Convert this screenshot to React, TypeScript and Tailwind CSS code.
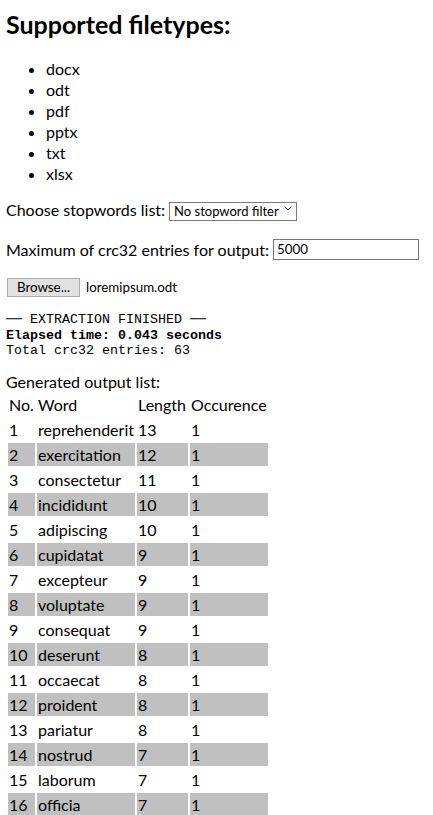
const fileTypes = ["docx", "odt", "pdf", "pptx", "txt", "xlsx"];

const words: [string, number][] = [
  ["reprehenderit", 13],
  ["exercitation", 12],
  ["consectetur", 11],
  ["incididunt", 10],
  ["adipiscing", 10],
  ["cupidatat", 9],
  ["excepteur", 9],
  ["voluptate", 9],
  ["consequat", 9],
  ["deserunt", 8],
  ["occaecat", 8],
  ["proident", 8],
  ["pariatur", 8],
  ["nostrud", 7],
  ["laborum", 7],
  ["officia", 7],
];

export default function App() {
  return (
    <div className="px-[6px] text-[16px] leading-[21px] text-black font-['Lato',sans-serif]">
      <h1 className="mt-[8px] text-[25px] font-bold leading-[32px]">Supported filetypes:</h1>

      <ul className="mt-[18px] list-disc pl-[40px]">
        {fileTypes.map((t) => (
          <li key={t}>{t}</li>
        ))}
      </ul>

      <div className="mt-[15px] flex h-[21px] items-center gap-[4px]">
        <span>Choose stopwords list:</span>
        <div className="relative">
          <select className="h-[19px] w-[128px] appearance-none border border-[#7a7a7a] bg-white pl-[4px] text-[13px] leading-[17px] outline-none">
            <option>No stopword filter</option>
          </select>
          <svg
            className="pointer-events-none absolute right-[5px] top-[7px]"
            width="8"
            height="5"
            viewBox="0 0 8 5"
            fill="none"
            stroke="#555"
            strokeWidth="1"
          >
            <path d="M0.5 0.5 L4 4 L7.5 0.5" />
          </svg>
        </div>
      </div>

      <div className="mt-[19px] flex h-[21px] items-center gap-[4px]">
        <span>Maximum of crc32 entries for output:</span>
        <input
          defaultValue="5000"
          className="h-[21px] w-[146px] border border-[#767676] px-[3px] text-[13.33px] outline-none"
        />
      </div>

      <div className="mt-[18px] flex h-[19px] items-center gap-[6px] text-[13.33px]">
        <button className="ml-[1px] h-[19px] w-[73px] border border-[#adadad] bg-[#e1e1e1] leading-[17px]">
          Browse...
        </button>
        <span>loremipsum.odt</span>
      </div>

      <div className="mt-[15px] font-['Liberation_Mono',monospace] text-[13.33px] leading-[15.5px]">
        <div>── EXTRACTION FINISHED ──</div>
        <div className="font-bold">Elapsed time: 0.043 seconds</div>
        <div>Total crc32 entries: 63</div>
      </div>

      <div className="mt-[12px]">Generated output list:</div>

      <table className="-mt-[1px] border-separate border-spacing-[2px] text-left">
        <thead>
          <tr>
            <th className="w-[27px] p-[1px] font-normal">No.</th>
            <th className="w-[98px] p-[1px] font-normal">Word</th>
            <th className="w-[51px] p-[1px] font-normal">Length</th>
            <th className="w-[77px] p-[1px] font-normal">Occurence</th>
          </tr>
        </thead>
        <tbody>
          {words.map(([w, len], i) => (
            <tr key={w} className={i % 2 === 1 ? "bg-[#c0c0c0]" : ""}>
              <td className="p-[1px]">{i + 1}</td>
              <td className="p-[1px]">{w}</td>
              <td className="p-[1px]">{len}</td>
              <td className="p-[1px]">1</td>
            </tr>
          ))}
        </tbody>
      </table>
    </div>
  );
}
